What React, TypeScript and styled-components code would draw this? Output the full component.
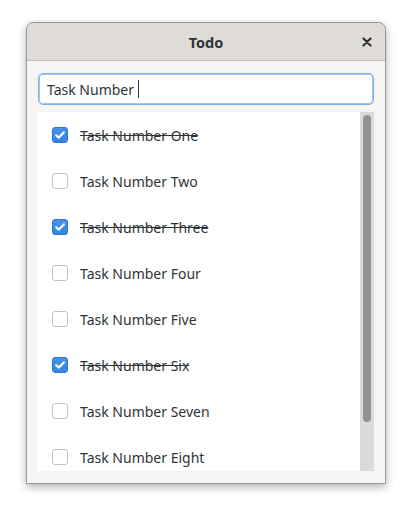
import React from "react";
import styled, { createGlobalStyle } from "styled-components";

const Global = createGlobalStyle`
  html, body { margin: 0; padding: 0; background: #ffffff; }
  body { font-family: "Noto Sans", "Open Sans", sans-serif; }
`;

const Page = styled.div`
  width: 412px;
  height: 513px;
  padding: 22px 26px 0 26px;
  box-sizing: border-box;
`;

const Window = styled.div`
  width: 360px;
  height: 462px;
  box-sizing: border-box;
  border: 1px solid #9a9996;
  border-radius: 8px 8px 0 0;
  background: #f6f5f4;
  display: flex;
  flex-direction: column;
  overflow: hidden;
  box-shadow: 0 3px 8px rgba(0, 0, 0, 0.3), 0 0 1px rgba(0, 0, 0, 0.2);
`;

const HeaderBar = styled.div`
  height: 37px;
  flex: none;
  background: #dfdcd8;
  border-bottom: 1px solid #c0bdb8;
  display: flex;
  align-items: center;
  justify-content: center;
  position: relative;
`;

const Title = styled.div`
  font-weight: 700;
  font-size: 14.5px;
  color: #2e3436;
`;

const CloseButton = styled.div`
  position: absolute;
  right: 13px;
  top: 14px;
  width: 10px;
  height: 10px;
  display: flex;
`;

const Content = styled.div`
  flex: 1;
  display: flex;
  flex-direction: column;
  gap: 7px;
  padding: 12px 11px 12px 11px;
  min-height: 0;
`;

const Entry = styled.div`
  height: 32px;
  box-sizing: border-box;
  border: 1px solid #82aee8;
  box-shadow: inset 0 0 0 1px #a7c6ee;
  border-radius: 5px;
  background: #ffffff;
  display: flex;
  align-items: center;
  padding-left: 8px;
  font-size: 14px;
  color: #2e3436;
`;

const Cursor = styled.span`
  display: inline-block;
  width: 1px;
  height: 18px;
  background: #2e3436;
  margin-left: 4px;
`;

const ListFrame = styled.div`
  flex: 1;
  display: flex;
  background: #ffffff;
  min-height: 0;
`;

const List = styled.div`
  flex: 1;
  display: flex;
  flex-direction: column;
  overflow: hidden;
`;

const Row = styled.div`
  height: 46px;
  flex: none;
  display: flex;
  align-items: center;
  padding-left: 14px;
  gap: 12px;
`;

const Box = styled.div<{ $checked: boolean }>`
  width: 16px;
  height: 16px;
  box-sizing: border-box;
  border-radius: 3px;
  display: flex;
  align-items: center;
  justify-content: center;
  border: 1px solid ${(p) => (p.$checked ? "#2a76d4" : "#c6c2bd")};
  background: ${(p) =>
    p.$checked ? "linear-gradient(#4a90e8, #3584e4)" : "#ffffff"};
`;

const Label = styled.span<{ $done: boolean }>`
  font-size: 14px;
  color: #2e3436;
  text-decoration: ${(p) => (p.$done ? "line-through" : "none")};
`;

const Trough = styled.div`
  width: 14px;
  flex: none;
  background: #dbdad8;
  display: flex;
  justify-content: center;
  padding-top: 3px;
  box-sizing: border-box;
`;

const Thumb = styled.div`
  width: 8px;
  height: 307px;
  border-radius: 4px;
  background: #8f9192;
`;

const tasks = [
  { name: "Task Number One", done: true },
  { name: "Task Number Two", done: false },
  { name: "Task Number Three", done: true },
  { name: "Task Number Four", done: false },
  { name: "Task Number Five", done: false },
  { name: "Task Number Six", done: true },
  { name: "Task Number Seven", done: false },
  { name: "Task Number Eight", done: false },
];

export default function App() {
  return (
    <Page>
      <Global />
      <Window>
        <HeaderBar>
          <Title>Todo</Title>
          <CloseButton>
            <svg width="10" height="10" viewBox="0 0 10 10">
              <path
                d="M1.5 1.5 L8.5 8.5 M8.5 1.5 L1.5 8.5"
                stroke="#2e3436"
                strokeWidth="2.2"
                strokeLinecap="round"
              />
            </svg>
          </CloseButton>
        </HeaderBar>
        <Content>
          <Entry>
            Task Number
            <Cursor />
          </Entry>
          <ListFrame>
            <List>
              {tasks.map((t) => (
                <Row key={t.name}>
                  <Box $checked={t.done}>
                    {t.done && (
                      <svg width="12" height="12" viewBox="0 0 12 12">
                        <path
                          d="M2.2 6.2 L4.8 8.6 L9.8 3.4"
                          stroke="#ffffff"
                          strokeWidth="2.2"
                          fill="none"
                          strokeLinecap="round"
                          strokeLinejoin="round"
                        />
                      </svg>
                    )}
                  </Box>
                  <Label $done={t.done}>{t.name}</Label>
                </Row>
              ))}
            </List>
            <Trough>
              <Thumb />
            </Trough>
          </ListFrame>
        </Content>
      </Window>
    </Page>
  );
}
